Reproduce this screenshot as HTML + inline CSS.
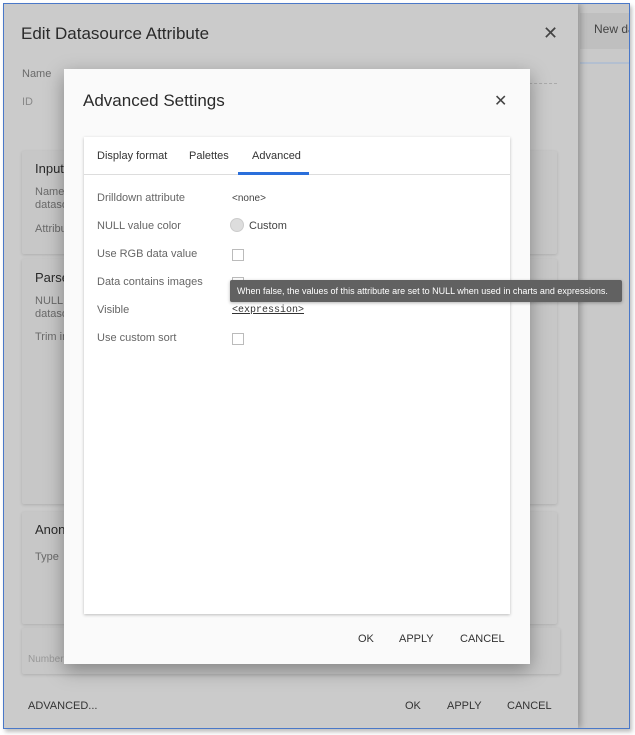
<!DOCTYPE html>
<html><head><style>
*{box-sizing:border-box;margin:0;padding:0}
body{width:635px;height:735px;background:#fff;font-family:"Liberation Sans",sans-serif;position:relative;overflow:hidden}
.a{position:absolute;white-space:nowrap}
.frame{left:3px;top:3px;width:627px;height:726px;border:1px solid #4a78c8;background:#c9c9c9;overflow:hidden;box-shadow:2px 3px 4px rgba(0,0,0,.25)}
.outer{left:0;top:0;width:574px;height:724px;background:#cbcbcb;box-shadow:3px 0 6px rgba(0,0,0,.25)}
.t{color:#2a2a2a}
.g{color:#6a6a6a;font-size:11px}
.card{background:#c7c7c7;border-radius:2px;box-shadow:0 1px 3px rgba(0,0,0,.15)}
.inner{left:64px;top:69px;width:466px;height:595px;background:#fafafa;box-shadow:0 6px 18px rgba(0,0,0,.35)}
.wc{left:20px;top:68px;width:426px;height:477px;background:#fff;box-shadow:0 1px 3px rgba(0,0,0,.25)}
.lab{left:13px;font-size:11px;color:#666}
.cb{left:148px;width:12px;height:12px;border:1px solid #bbb;background:#fff}
.btn{font-size:11px;color:#333}
</style></head><body>
<div class="a frame">
 <div class="a" style="left:576px;top:9px;width:60px;height:36px;background:#bfbfbf"></div>
 <div class="a" style="left:590px;top:18px;font-size:12px;color:#444">New da</div>
 <div class="a" style="left:576px;top:58px;width:60px;height:2px;background:#b3bfd0"></div>
 <div class="a outer">
  <div class="a t" style="left:17px;top:20px;font-size:17px">Edit Datasource Attribute</div>
  <div class="a" style="left:539px;top:19px;font-size:18px;color:#444">✕</div>
  <div class="a g" style="left:18px;top:64px">Name</div>
  <div class="a g" style="left:18px;top:92px;color:#888">ID</div>
  <div class="a" style="left:366px;top:79px;width:187px;border-top:1px dashed #aaa"></div>
  <div class="a card" style="left:18px;top:147px;width:535px;height:103px"></div>
  <div class="a t" style="left:31px;top:157px;font-size:13px">Input</div>
  <div class="a g" style="left:31px;top:182px;line-height:13px">Name<br>dataso</div>
  <div class="a g" style="left:31px;top:219px">Attribu</div>
  <div class="a t" style="left:513px;top:160px;font-size:12px">cy</div>
  <div class="a card" style="left:18px;top:255px;width:535px;height:245px"></div>
  <div class="a t" style="left:31px;top:266px;font-size:13px">Parse</div>
  <div class="a g" style="left:31px;top:291px;line-height:13px">NULL v<br>dataso</div>
  <div class="a g" style="left:31px;top:327px">Trim in</div>
  <div class="a card" style="left:18px;top:508px;width:535px;height:112px"></div>
  <div class="a t" style="left:31px;top:518px;font-size:13px">Anony</div>
  <div class="a g" style="left:31px;top:547px">Type</div>
  <div class="a card" style="left:18px;top:624px;width:538px;height:46px"></div>
  <div class="a" style="left:24px;top:650px;font-size:10px;color:#999">Number</div>
  <div class="a btn" style="left:24px;top:696px">ADVANCED...</div>
  <div class="a btn" style="left:401px;top:696px">OK</div>
  <div class="a btn" style="left:443px;top:696px">APPLY</div>
  <div class="a btn" style="left:503px;top:696px">CANCEL</div>
 </div>
</div>
<div class="a inner">
 <div class="a t" style="left:19px;top:22px;font-size:17px">Advanced Settings</div>
 <div class="a" style="left:430px;top:22px;font-size:16px;color:#444">✕</div>
 <div class="a wc">
  <div class="a" style="left:13px;top:13px;font-size:11px;color:#333">Display format</div>
  <div class="a" style="left:105px;top:13px;font-size:11px;color:#333">Palettes</div>
  <div class="a" style="left:168px;top:13px;font-size:11px;color:#333">Advanced</div>
  <div class="a" style="left:0;top:37px;width:426px;height:1px;background:#ddd"></div>
  <div class="a" style="left:154px;top:35px;width:71px;height:3px;background:#2a6fdb"></div>
  <div class="a lab" style="top:55px">Drilldown attribute</div>
  <div class="a" style="left:148px;top:56px;font-size:10px;color:#444">&lt;none&gt;</div>
  <div class="a lab" style="top:83px">NULL value color</div>
  <div class="a" style="left:146px;top:81px;width:14px;height:14px;border-radius:50%;background:#ddd;border:1px solid #ccc"></div>
  <div class="a" style="left:165px;top:83px;font-size:11px;color:#444">Custom</div>
  <div class="a lab" style="top:111px">Use RGB data value</div>
  <div class="a cb" style="top:112px"></div>
  <div class="a lab" style="top:139px">Data contains images</div>
  <div class="a cb" style="top:140px"></div>
  <div class="a lab" style="top:167px">Visible</div>
  <div class="a" style="left:148px;top:168px;font-size:10px;font-family:'Liberation Mono',monospace;color:#333;text-decoration:underline">&lt;expression&gt;</div>
  <div class="a lab" style="top:195px">Use custom sort</div>
  <div class="a cb" style="top:196px"></div>
 </div>
 <div class="a btn" style="left:294px;top:564px">OK</div>
 <div class="a btn" style="left:335px;top:564px">APPLY</div>
 <div class="a btn" style="left:396px;top:564px">CANCEL</div>
</div>
<div class="a" style="left:230px;top:280px;width:392px;height:22px;background:#616161;border-radius:2px;color:#fff;font-size:9px;line-height:22px;padding-left:7px;overflow:hidden;box-shadow:0 1px 3px rgba(0,0,0,.3)">When false, the values of this attribute are set to NULL when used in charts and expressions.</div>
</body></html>
